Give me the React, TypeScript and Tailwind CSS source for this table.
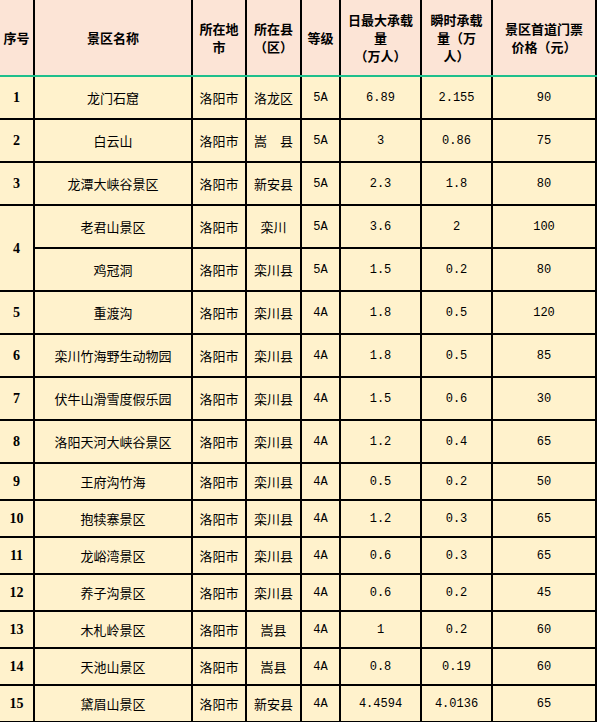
interface Spot {
  no: string;
  name: string;
  city: string;
  county: string;
  level: string;
  daily: string;
  instant: string;
  price: string;
}

const ROWS: Spot[] = [
  { no: '1', name: '龙门石窟', city: '洛阳市', county: '洛龙区', level: '5A', daily: '6.89', instant: '2.155', price: '90' },
  { no: '2', name: '白云山', city: '洛阳市', county: '嵩　县', level: '5A', daily: '3', instant: '0.86', price: '75' },
  { no: '3', name: '龙潭大峡谷景区', city: '洛阳市', county: '新安县', level: '5A', daily: '2.3', instant: '1.8', price: '80' },
  { no: '4', name: '老君山景区', city: '洛阳市', county: '栾川', level: '5A', daily: '3.6', instant: '2', price: '100' },
  { no: '', name: '鸡冠洞', city: '洛阳市', county: '栾川县', level: '5A', daily: '1.5', instant: '0.2', price: '80' },
  { no: '5', name: '重渡沟', city: '洛阳市', county: '栾川县', level: '4A', daily: '1.8', instant: '0.5', price: '120' },
  { no: '6', name: '栾川竹海野生动物园', city: '洛阳市', county: '栾川县', level: '4A', daily: '1.8', instant: '0.5', price: '85' },
  { no: '7', name: '伏牛山滑雪度假乐园', city: '洛阳市', county: '栾川县', level: '4A', daily: '1.5', instant: '0.6', price: '30' },
  { no: '8', name: '洛阳天河大峡谷景区', city: '洛阳市', county: '栾川县', level: '4A', daily: '1.2', instant: '0.4', price: '65' },
  { no: '9', name: '王府沟竹海', city: '洛阳市', county: '栾川县', level: '4A', daily: '0.5', instant: '0.2', price: '50' },
  { no: '10', name: '抱犊寨景区', city: '洛阳市', county: '栾川县', level: '4A', daily: '1.2', instant: '0.3', price: '65' },
  { no: '11', name: '龙峪湾景区', city: '洛阳市', county: '栾川县', level: '4A', daily: '0.6', instant: '0.3', price: '65' },
  { no: '12', name: '养子沟景区', city: '洛阳市', county: '栾川县', level: '4A', daily: '0.6', instant: '0.2', price: '45' },
  { no: '13', name: '木札岭景区', city: '洛阳市', county: '嵩县', level: '4A', daily: '1', instant: '0.2', price: '60' },
  { no: '14', name: '天池山景区', city: '洛阳市', county: '嵩县', level: '4A', daily: '0.8', instant: '0.19', price: '60' },
  { no: '15', name: '黛眉山景区', city: '洛阳市', county: '新安县', level: '4A', daily: '4.4594', instant: '4.0136', price: '65' },
];

const cjk = "font-['Noto_Sans_CJK_SC','Noto_Sans',sans-serif]";
const mono = "font-['Liberation_Mono',monospace]";

export default function App() {
  return (
    <div className="w-[598px] h-[722px] overflow-hidden bg-white">
      <table className="table-fixed border-collapse w-[596px] text-black">
        <colgroup>
          <col className="w-[34px]" />
          <col className="w-[158px]" />
          <col className="w-[54px]" />
          <col className="w-[55px]" />
          <col className="w-[39px]" />
          <col className="w-[81px]" />
          <col className="w-[71px]" />
          <col className="w-[104px]" />
        </colgroup>
        <thead>
          <tr className={`h-[76px] bg-[#fce4d6] text-[13px] leading-[18px] font-bold ${cjk}`}>
            {[
              <>序号</>,
              <>景区名称</>,
              <>所在地<br />市</>,
              <>所在县<br />（区）</>,
              <>等级</>,
              <>日最大承载<br />量<br />（万人）</>,
              <>瞬时承载<br />量（万<br />人）</>,
              <>景区首道门票<br />价格（元）</>,
            ].map((h, i) => (
              <th
                key={i}
                className={`p-0 text-center align-middle border-x-2 border-black border-b-2 border-b-[#1fbf8c] ${i === 0 ? 'border-l-0' : ''}`}
              >
                {h}
              </th>
            ))}
          </tr>
        </thead>
        <tbody className="bg-[#fff2cc]">
          {ROWS.map((r, idx) => {
            const tall = idx < 9;
            const cell = 'p-0 text-center align-middle border-2 border-black';
            return (
              <tr key={idx} className={tall ? 'h-[43px]' : 'h-[37px]'}>
                {idx === 3 && (
                  <td rowSpan={2} className={`${cell} border-l-0 font-['Liberation_Serif',serif] font-bold text-[14px]`}>
                    4
                  </td>
                )}
                {r.no !== '' && idx !== 3 && (
                  <td className={`${cell} border-l-0 font-['Liberation_Serif',serif] font-bold text-[14px]`}>
                    {r.no}
                  </td>
                )}
                <td className={`${cell} ${cjk} text-[13px]`}>{r.name}</td>
                <td className={`${cell} ${cjk} text-[13px]`}>{r.city}</td>
                <td className={`${cell} ${cjk} text-[13px]`}>{r.county}</td>
                <td className={`${cell} ${mono} text-[12px]`}>{r.level}</td>
                <td className={`${cell} ${mono} text-[12px]`}>{r.daily}</td>
                <td className={`${cell} ${mono} text-[12px]`}>{r.instant}</td>
                <td className={`${cell} ${mono} text-[12px]`}>{r.price}</td>
              </tr>
            );
          })}
        </tbody>
      </table>
    </div>
  );
}
